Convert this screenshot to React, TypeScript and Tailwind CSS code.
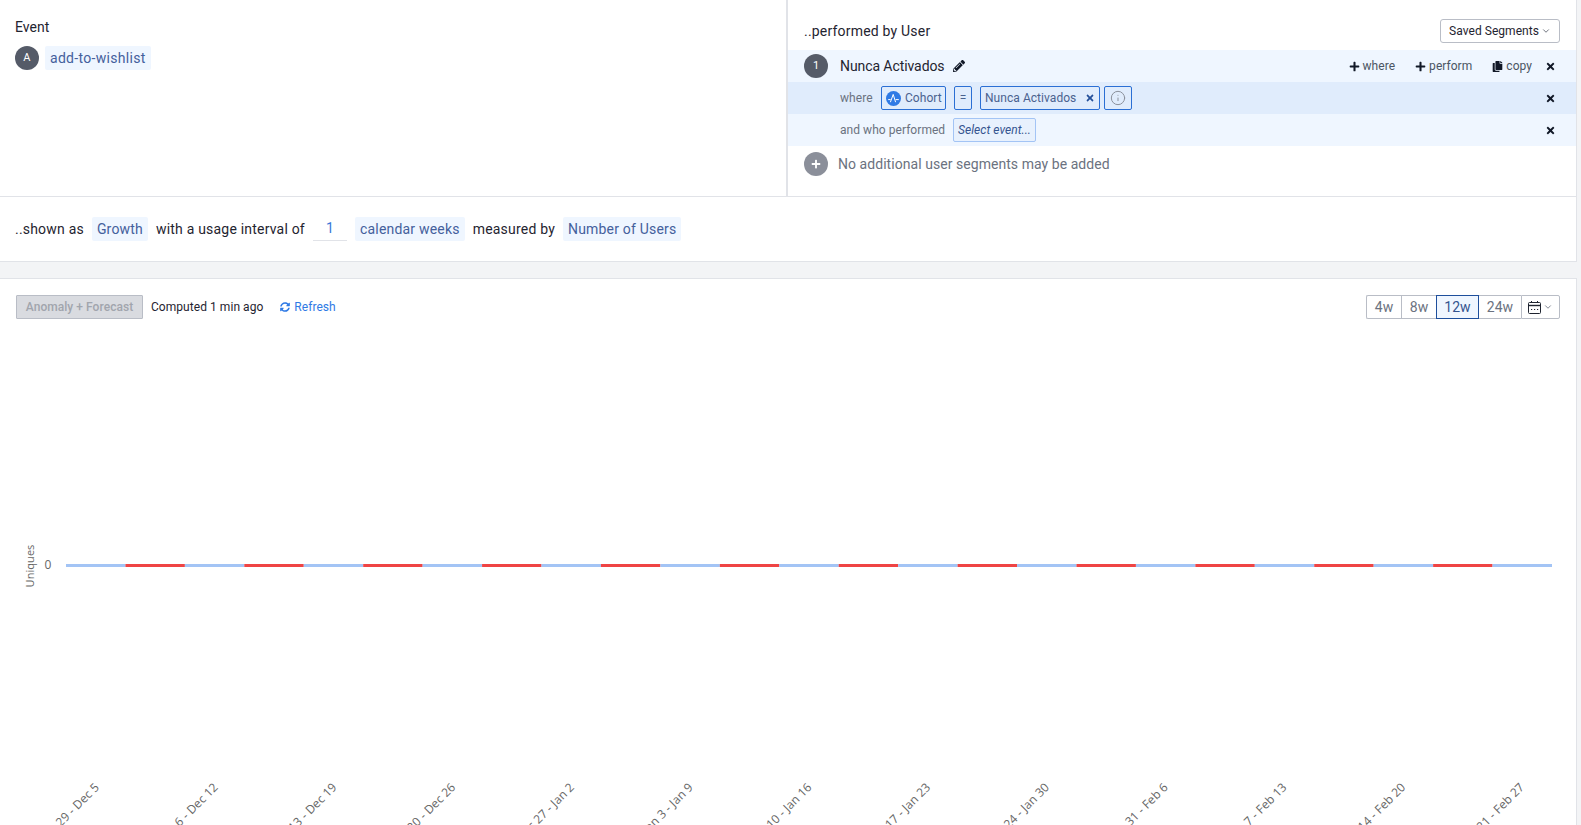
import { FaCopy, FaPencilAlt, FaPlus, FaSyncAlt, FaTimes } from "react-icons/fa";
import { ChevronDown, Info } from "lucide-react";

const ranges = [
  { label: "4w", className: "w-[35px] border-r-0 border-[#b9bdc6] rounded-l-[2px]" },
  { label: "8w", className: "w-[35px] border-r-0 border-[#b9bdc6]" },
  { label: "12w", className: "w-[43px] border-[#1e4f9c] bg-[#eff6ff] text-[#34548f]" },
  { label: "24w", className: "w-[42px] border-l-0 border-r-0 border-[#b9bdc6]" },
];
const weeks = [
  "Nov 29 - Dec 5",
  "Dec 6 - Dec 12",
  "Dec 13 - Dec 19",
  "Dec 20 - Dec 26",
  "Dec 27 - Jan 2",
  "Jan 3 - Jan 9",
  "Jan 10 - Jan 16",
  "Jan 17 - Jan 23",
  "Jan 24 - Jan 30",
  "Jan 31 - Feb 6",
  "Feb 7 - Feb 13",
  "Feb 14 - Feb 20",
  "Feb 21 - Feb 27",
];

function Chip({ children }: { children: React.ReactNode }) {
  return (
    <span className="h-6 px-[5px] flex items-center rounded-[2px] bg-[#eff6ff] text-[#44609c] text-[14px]">
      {children}
    </span>
  );
}

function CloseX() {
  return <FaTimes className="w-[11px] h-[11px] text-[#111827]" />;
}

function CalendarIcon() {
  return (
    <svg width="13" height="13" viewBox="0 0 13 13" fill="none" stroke="#1f2430" strokeWidth="1">
      <rect x="0.5" y="1.5" width="12" height="11" rx="1" />
      <path d="M0.5 4.5h12" strokeWidth="1.4" />
      <path d="M3.5 0v2M9.5 0v2" />
      <path d="M3 8.5h1.2M6 8.5h1.2M9 8.5h1.2" />
    </svg>
  );
}

function Chart() {
  const segW = (1552 - 66) / 25;
  return (
    <svg width="1576" height="507" className="block" style={{ fontFamily: "'Open Sans', sans-serif" }}>
      <text x="0" y="0" transform="translate(34 247) rotate(-90)" textAnchor="middle" fontSize="11" fill="#666666">
        Uniques
      </text>
      <text x="48" y="250" textAnchor="middle" fontSize="12" fill="#666666">0</text>
      {Array.from({ length: 25 }).map((_, i) => (
        <rect
          key={i}
          x={66 + i * segW}
          y={245}
          width={segW}
          height={3}
          fill={i % 2 === 0 ? "#a3c4f5" : "#ef4444"}
        />
      ))}
      {weeks.map((w, i) => {
        const x = 100 + i * 118.75;
        return (
          <text key={w} x={x} y={469} transform={`rotate(-45 ${x} 469)`} textAnchor="end" fontSize="12" fill="#666666">
            {w}
          </text>
        );
      })}
    </svg>
  );
}

export default function App() {
  return (
    <div className="h-screen overflow-hidden bg-[#f3f4f6] font-['Roboto',sans-serif] tracking-[0.05px] text-[#1f2937]">
      {/* Query builder */}
      <div className="h-[197px] flex bg-white border-b border-r border-[#e1e3e8] mr-1">
        <div className="w-[788px] shrink-0 border-r-2 border-[#e1e3e8] pl-[15px] pt-[17px]">
          <div className="text-[14px] leading-[20px] text-[#1f2430]">Event</div>
          <div className="flex items-center gap-[6px] mt-[9px] tracking-[0.3px]">
            <span className="w-6 h-6 rounded-full bg-[#555b68] text-white text-[11px] flex items-center justify-center">A</span>
            <Chip>add-to-wishlist</Chip>
          </div>
        </div>
        <div className="flex-1 min-w-0">
          <div className="h-[50px] flex items-center justify-between pl-[16px] pr-[16px] pt-[12px]">
            <span className="text-[14px] tracking-[0.2px] text-[#1f2430]">..performed by User</span>
            <button className="h-6 px-2 flex items-center gap-[2px] bg-white border border-[#b9bdc6] rounded-[3px] text-[12px] text-[#1f2430]">
              Saved Segments <ChevronDown className="w-[10px] h-[10px] text-[#555b68]" />
            </button>
          </div>
          <div className="h-8 flex items-center bg-[#eff6ff] pl-[16px] pr-[20px]">
            <span className="w-6 h-6 rounded-full bg-[#555b68] text-white text-[11px] flex items-center justify-center">1</span>
            <span className="ml-3 text-[14px] tracking-[-0.08px] text-[#1f2430]">Nunca Activados</span>
            <FaPencilAlt className="ml-2 w-3 h-3 text-[#111827]" />
            <div className="ml-auto flex items-center text-[12px] text-[#4b5563]">
              <span className="flex items-center gap-[3px]"><FaPlus className="w-[11px] h-[11px] text-[#111827]" />where</span>
              <span className="flex items-center gap-[3px] ml-[20px]"><FaPlus className="w-[11px] h-[11px] text-[#111827]" />perform</span>
              <span className="flex items-center gap-[3px] ml-[20px]"><FaCopy className="w-[11px] h-[11px] text-[#111827]" />copy</span>
              <span className="ml-[13px]"><CloseX /></span>
            </div>
          </div>
          <div className="h-8 flex items-center bg-[#e0ecfc] pl-[52px] pr-[20px] text-[12px]">
            <span className="w-[33px] text-[#6b7280]">where</span>
            <span className="ml-2 w-[65px] h-6 px-1 flex items-center gap-1 border border-[#2b6fd4] rounded-[2px] text-[#4a628f]">
              <svg width="15" height="15" viewBox="0 0 15 15" className="shrink-0">
                <circle cx="7.5" cy="7.5" r="7.5" fill="#2f7ae5" />
                <path d="M2.2 8.6h2.4M4.4 11.2 7.2 3.4l2.4 7.8M9.6 8.6h3.2" fill="none" stroke="#fff" strokeWidth="1" />
              </svg>
              Cohort
            </span>
            <span className="ml-2 w-[18px] h-6 flex items-center justify-center border border-[#2b6fd4] rounded-[2px] text-[#4a628f]">=</span>
            <span className="ml-2 w-[120px] h-6 px-1 flex items-center justify-between border border-[#2b6fd4] rounded-[2px] text-[#4a628f]">
              Nunca Activados
              <FaTimes className="w-[10px] h-[10px] text-[#24509a]" />
            </span>
            <span className="ml-1 w-[28px] h-6 flex items-center justify-center border border-[#2b6fd4] rounded-[2px]">
              <Info className="w-4 h-4 text-[#8b919c]" strokeWidth={1.5} />
            </span>
            <span className="ml-auto"><CloseX /></span>
          </div>
          <div className="h-8 flex items-center bg-[#eff6ff] pl-[52px] pr-[20px] text-[12px]">
            <span className="w-[105px] whitespace-nowrap text-[#6b7280]">and who performed</span>
            <span className="ml-2 w-[83px] h-6 flex items-center justify-center border border-[#a3c4f5] rounded-[2px] bg-[#e8f1fd] italic text-[#34548f]">Select event...</span>
            <span className="ml-auto"><CloseX /></span>
          </div>
          <div className="h-[36px] flex items-center pl-[16px]">
            <span className="w-6 h-6 rounded-full bg-[#8b8f9a] flex items-center justify-center">
              <FaPlus className="w-[10px] h-[10px] text-white" />
            </span>
            <span className="ml-[10px] text-[14px] text-[#6b7280]">No additional user segments may be added</span>
          </div>
        </div>
      </div>

      {/* Metric sentence */}
      <div className="h-[65px] flex items-center gap-2 pl-[15px] mr-1 bg-white border-b border-r border-[#e1e3e8] text-[14px] tracking-[0.2px] text-[#1f2430]">
        <span>..shown as</span>
        <Chip>Growth</Chip>
        <span>with a usage interval of</span>
        <span className="w-[34px] h-6 flex items-center justify-center border-b border-[#e1e3e8] text-[#3b78d8]">1</span>
        <Chip>calendar weeks</Chip>
        <span>measured by</span>
        <Chip>Number of Users</Chip>
      </div>

      {/* Chart card */}
      <div className="mt-4 mr-1 h-[600px] bg-white border-t border-r border-[#e1e3e8]">
        <div className="flex items-center h-[24px] mt-4 pl-4 pr-[16px]">
          <button className="w-[127px] h-6 bg-[#d9dbe0] border border-[#b9bdc6] rounded-[1px] text-[12px] font-medium text-[#a1a5ad]">Anomaly + Forecast</button>
          <span className="ml-2 text-[12px] text-[#1f2430]">Computed 1 min ago</span>
          <span className="ml-[17px] flex items-center gap-1 text-[12px] text-[#2f7ae5]">
            <FaSyncAlt className="w-[10px] h-[10px]" />Refresh
          </span>
          <div className="ml-auto flex h-6 text-[14px] text-[#6b7280]">
            {ranges.map((r) => (
              <span key={r.label} className={`flex items-center justify-center border ${r.className}`}>
                {r.label}
              </span>
            ))}
            <span className="w-[39px] flex items-center justify-center gap-[2px] border border-[#b9bdc6] rounded-r-[2px]">
              <CalendarIcon />
              <ChevronDown className="w-[10px] h-[10px]" />
            </span>
          </div>
        </div>
        <Chart />
      </div>
    </div>
  );
}
